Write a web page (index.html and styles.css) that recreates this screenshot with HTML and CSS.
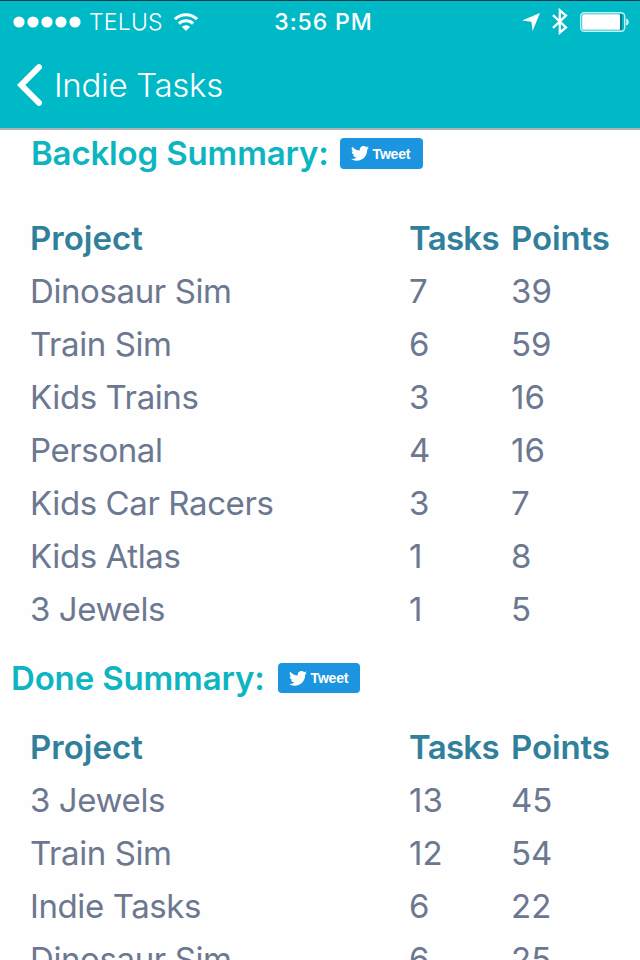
FILE: index.html
```html
<!DOCTYPE html>
<html lang="en">
  <head>
    <meta charset="UTF-8" />
    <meta name="viewport" content="width=device-width, initial-scale=1.0" />
    <title>Indie Tasks</title>
    <link rel="stylesheet" href="styles.css">
  </head>
  <body>
    <header class="topbar">
      <div class="status-bar">
        <div class="status-left">
          <svg class="signal" width="68" height="12" viewBox="0 0 68 12" fill="#fff">
            <circle cx="6" cy="6" r="5.6" />
            <circle cx="20" cy="6" r="5.6" />
            <circle cx="34" cy="6" r="5.6" />
            <circle cx="48" cy="6" r="5.6" />
            <circle cx="62" cy="6" r="5.6" />
          </svg>
          <span class="carrier">TELUS</span>
          <svg class="wifi" width="24" height="18" viewBox="0 0 24 18">
            <path d="M1 6.2a16 16 0 0 1 22 0M4.900 10.600a10.300 10.300 0 0 1 14.200 0" fill="none" stroke="#fff" stroke-width="3.1" />
            <path d="M12 18l-4.200-4.200a6.200 6.200 0 0 1 8.400 0z" fill="#fff" />
          </svg>
        </div>
        <span class="clock">3:56 PM</span>
        <div class="status-right">
          <svg class="location" width="18" height="18" viewBox="0 0 18 18" fill="#fff">
            <path d="M18 0L10.600 18 9.400 8.800 0 7.600z" />
          </svg>
          <svg class="bluetooth" width="16" height="27" viewBox="0 0 16 27" fill="none" stroke="#fff" stroke-width="2.3">
            <path d="M1 7.200l13 12.300-6.200 5.200V2.300L14 7.500 1 19.800" />
          </svg>
          <svg class="battery" width="49" height="20" viewBox="0 0 49 20">
            <rect x="0.7" y="0.7" width="44" height="18.6" rx="3.5" fill="none" stroke="#c8f3f5" stroke-width="1.4" />
            <rect x="2.2" y="2.2" width="38" height="15.6" rx="1.5" fill="#fff" />
            <path d="M40.200 2.200h1.600v15.600h-1.600z" fill="#106c7a" />
            <path d="M46.200 6.500c3.400.8 3.400 6.200 0 7z" fill="#d6f6f8" />
          </svg>
        </div>
      </div>
      <nav class="nav">
        <svg class="back" width="26" height="42" viewBox="0 0 26 42">
          <path d="M22 3.200L4.200 21 22 38.800" fill="none" stroke="#fff" stroke-width="6" stroke-linecap="round" />
        </svg>
        <span class="nav-title">Indie Tasks</span>
      </nav>
    </header>

    <main>
      <section class="summary">
        <div class="summary-head backlog">
          <h2>Backlog Summary:</h2>
          <a class="tweet-btn">
            <svg width="18" height="15" viewBox="0 0 24 20" fill="#fff">
              <path d="M24 2.400a9.800 9.800 0 0 1-2.800.8A4.900 4.900 0 0 0 23.300.4a9.900 9.900 0 0 1-3.100 1.200 4.900 4.900 0 0 0-8.400 4.500A14 14 0 0 1 1.700.9a4.900 4.900 0 0 0 1.500 6.600A4.900 4.900 0 0 1 1 6.900v.1a4.900 4.900 0 0 0 3.900 4.800 4.900 4.900 0 0 1-2.200.1 4.900 4.900 0 0 0 4.600 3.400A9.900 9.900 0 0 1 0 17.400a14 14 0 0 0 7.500 2.200c9.100 0 14.300-7.700 14-14.600A10 10 0 0 0 24 2.400z" />
            </svg>
            <span>Tweet</span>
          </a>
        </div>
        <table class="tasks">
          <tr><th class="project">Project</th><th class="count">Tasks</th><th class="points">Points</th></tr>
          <tr><td class="name">Dinosaur Sim</td><td>7</td><td>39</td></tr>
          <tr><td class="name">Train Sim</td><td>6</td><td>59</td></tr>
          <tr><td class="name">Kids Trains</td><td>3</td><td>16</td></tr>
          <tr><td class="name">Personal</td><td>4</td><td>16</td></tr>
          <tr><td class="name">Kids Car Racers</td><td>3</td><td>7</td></tr>
          <tr><td class="name">Kids Atlas</td><td>1</td><td>8</td></tr>
          <tr><td class="name">3 Jewels</td><td>1</td><td>5</td></tr>
        </table>
      </section>

      <section class="summary">
        <div class="summary-head done">
          <h2>Done Summary:</h2>
          <a class="tweet-btn">
            <svg width="18" height="15" viewBox="0 0 24 20" fill="#fff">
              <path d="M24 2.400a9.800 9.800 0 0 1-2.800.8A4.900 4.900 0 0 0 23.300.4a9.900 9.900 0 0 1-3.100 1.200 4.900 4.900 0 0 0-8.400 4.500A14 14 0 0 1 1.700.9a4.900 4.900 0 0 0 1.500 6.600A4.900 4.900 0 0 1 1 6.900v.1a4.900 4.900 0 0 0 3.900 4.800 4.900 4.900 0 0 1-2.200.1 4.900 4.900 0 0 0 4.600 3.400A9.900 9.900 0 0 1 0 17.400a14 14 0 0 0 7.500 2.200c9.100 0 14.300-7.700 14-14.600A10 10 0 0 0 24 2.400z" />
            </svg>
            <span>Tweet</span>
          </a>
        </div>
        <table class="tasks">
          <tr><th class="project">Project</th><th class="count">Tasks</th><th class="points">Points</th></tr>
          <tr><td class="name">3 Jewels</td><td>13</td><td>45</td></tr>
          <tr><td class="name">Train Sim</td><td>12</td><td>54</td></tr>
          <tr><td class="name">Indie Tasks</td><td>6</td><td>22</td></tr>
          <tr><td class="name">Dinosaur Sim</td><td>6</td><td>25</td></tr>
        </table>
      </section>
    </main>
  </body>
</html>
```

FILE: styles.css
```css
* {
  box-sizing: border-box;
}

body {
  margin: 0;
  height: 960px;
  overflow: hidden;
  display: flex;
  flex-direction: column;
  background: #fefefe;
  color: #6b7890;
  font-family: Inter, "Liberation Sans", sans-serif;
}

.topbar {
  flex: none;
  height: 130px;
  background: #00b9c6;
  color: #fff;
  border-top: 1px solid #123a47;
  border-bottom: 2px solid #a9b4b8;
}

.status-bar {
  display: grid;
  grid-template-columns: 1fr auto 1fr;
  align-items: center;
  height: 41px;
  padding: 0 11px 0 13px;
}

.status-left,
.status-right {
  display: flex;
  align-items: center;
}

.status-right {
  justify-content: flex-end;
}

.carrier {
  margin-left: 8px;
  font-size: 23px;
  font-weight: 300;
  letter-spacing: 0.2px;
}

.wifi {
  margin-left: 11px;
}

.clock {
  margin-left: 5px;
  font-size: 23px;
  font-weight: 500;
  letter-spacing: 0.9px;
}

.bluetooth {
  margin: 0 12px;
}

.nav {
  display: flex;
  align-items: center;
  height: 86px;
  padding-left: 17px;
}

.nav-title {
  margin-left: 11px;
  font-size: 33px;
  font-weight: 350;
  letter-spacing: -0.3px;
}

main {
  flex: 1;
  min-height: 0;
  overflow: hidden;
}

.summary-head {
  display: flex;
  align-items: center;
}

.backlog {
  height: 82px;
  padding: 0 0 35px 31px;
}

.done {
  height: 85px;
  padding: 0 0 1px 11px;
}

h2 {
  margin: 0;
  color: #0cb5c1;
  font-size: 33px;
  font-weight: 600;
  line-height: 47px;
  letter-spacing: -0.15px;
}

.tweet-btn {
  display: flex;
  align-items: center;
  width: 83px;
  height: 31px;
  margin-left: 11px;
  padding-left: 11px;
  border-radius: 4px;
  background: #1b95e0;
  color: #fff;
  font: bold 14px "Liberation Sans", Arial, sans-serif;
  letter-spacing: -0.2px;
}

.done .tweet-btn {
  width: 82px;
  height: 30px;
  margin-left: 13px;
}

.tweet-btn span {
  margin-left: 4px;
}

.tasks {
  width: 610px;
  margin-left: 30px;
  border-collapse: collapse;
  table-layout: fixed;
  font-size: 33px;
}

.tasks th,
.tasks td {
  height: 53px;
  padding: 0;
  line-height: 53px;
  text-align: left;
  white-space: nowrap;
}

.tasks td {
  font-weight: 400;
}

.tasks .name {
  letter-spacing: -0.4px;
}

.tasks th {
  color: #31809b;
  font-weight: 600;
}

.tasks .project {
  width: 379px;
  letter-spacing: 0;
}

.tasks .count {
  width: 102px;
  letter-spacing: -0.7px;
}

.tasks .points {
  letter-spacing: -0.1px;
}
```
